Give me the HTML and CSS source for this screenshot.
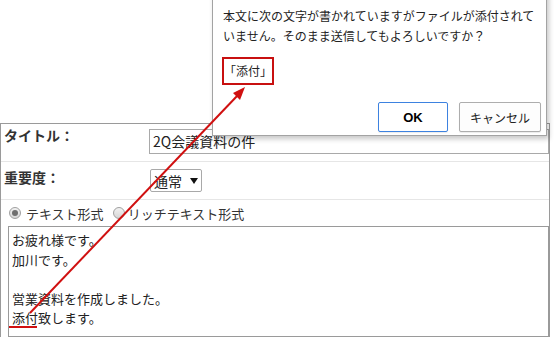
FILE: index.html
```html
<!DOCTYPE html>
<html lang="ja">
<head>
    <meta charset="UTF-8">
    <meta name="viewport" content="width=device-width, initial-scale=1.0">
    <title>メール作成</title>
    <link rel="stylesheet" href="styles.css">
</head>
<body>
    <div class="page">
        <div class="mail-form">
            <div class="row row-title">
                <div class="label">タイトル：</div>
                <div class="text-input">2Q会議資料の件</div>
            </div>
            <div class="row row-priority">
                <div class="label">重要度：</div>
                <div class="select">
                    <span>通常</span>
                    <svg class="select-arrow" width="8" height="6" viewBox="0 0 8 6"><path d="M0 0H8L4 6Z" fill="#111"/></svg>
                </div>
            </div>
            <div class="row row-body">
                <div class="format">
                    <span class="radio checked"></span><span class="format-text">テキスト形式</span>
                    <span class="radio"></span><span class="format-text">リッチテキスト形式</span>
                </div>
                <div class="body-text">お疲れ様です。<br>加川です。<br><br>営業資料を作成しました。<br>添付致します。</div>
            </div>
        </div>

        <!-- confirm dialog -->
        <div class="dialog">
            <p class="dialog-message">本文に次の文字が書かれていますがファイルが添付されていません。そのまま送信してもよろしいですか？</p>
            <div class="keyword">「添付」</div>
            <div class="dialog-buttons">
                <button class="btn btn-ok">OK</button>
                <button class="btn">キャンセル</button>
            </div>
        </div>

        <svg class="annotation" width="554" height="337" viewBox="0 0 554 337">
            <line x1="9" y1="327" x2="37" y2="327" stroke="#d01010" stroke-width="2"/>
            <line x1="30" y1="313" x2="238" y2="95" stroke="#d01010" stroke-width="2"/>
            <polygon points="245,87 233,93 240,100" fill="#d01010"/>
        </svg>
    </div>
</body>
</html>
```

FILE: styles.css
```css
body {
    margin: 0;
    background: #fff;
    font-family: "Noto Sans CJK JP", "Noto Sans", sans-serif;
    color: #333;
}
.page {
    position: relative;
    width: 554px;
    height: 337px;
    overflow: hidden;
}
.mail-form {
    margin-top: 123px;
    width: 550px;
    box-sizing: border-box;
    border-top: 1px solid #9a9a9a;
    border-left: 1px solid #9a9a9a;
    border-right: 1px solid #9a9a9a;
}
.row {
    display: flex;
    align-items: flex-start;
    border-bottom: 1px solid #e6e6e6;
}
.label {
    width: 148px;
    box-sizing: border-box;
    padding-left: 3px;
    font-size: 14px;
    line-height: 20px;
    font-weight: bold;
    color: #333;
}
.row-title {
    padding: 1px 0 7px 0;
}
.text-input {
    flex: 1;
    margin-top: 4px;
    height: 25px;
    box-sizing: border-box;
    border: 1px solid #a9a9a9;
    padding-left: 3px;
    font-size: 14px;
    line-height: 23px;
    color: #222;
}
.row-priority {
    padding: 5px 0 7px 0;
}
.select {
    margin-top: 2px;
    margin-left: 1px;
    height: 23px;
    width: 52px;
    box-sizing: border-box;
    border: 1px solid #a9a9a9;
    border-radius: 2px;
    display: flex;
    align-items: center;
    padding-left: 3px;
    font-size: 14px;
    color: #222;
}
.select-arrow {
    margin-left: 8px;
}
.row-body {
    flex-direction: column;
    align-items: stretch;
    padding: 3px 0 0 7px;
    border-bottom: none;
}
.format {
    display: flex;
    align-items: center;
    height: 20px;
    font-size: 13px;
    color: #333;
}
.radio {
    width: 12px;
    height: 12px;
    box-sizing: border-box;
    border: 1px solid #a0a0a0;
    border-radius: 50%;
    background: linear-gradient(#f2f2f2, #d6d6d6);
    margin: 0 5px 0 1px;
    position: relative;
}
.radio.checked::after {
    content: "";
    position: absolute;
    left: 2px;
    top: 2px;
    width: 6px;
    height: 6px;
    border-radius: 50%;
    background: #6f6f6f;
}
.format-text {
    margin-right: 4px;
}
.format-text + .radio {
    margin-left: 5px;
    margin-right: 3px;
}
.body-text {
    margin-top: 3px;
    height: 111px;
    box-sizing: border-box;
    border: 1px solid #9a9a9a;
    padding: 3px 3px;
    font-size: 13px;
    line-height: 19.5px;
    color: #222;
}
.dialog {
    position: absolute;
    left: 212px;
    top: -10px;
    width: 335px;
    height: 146px;
    box-sizing: border-box;
    border: 1px solid #a3a3a3;
    background: #fff;
    box-shadow: 2px 3px 5px rgba(0, 0, 0, 0.22);
    padding: 15px 5px 3px 10px;
    display: flex;
    flex-direction: column;
}
.dialog-message {
    margin: 0;
    font-size: 12px;
    line-height: 20px;
    color: #222;
}
.keyword {
    align-self: flex-start;
    margin: 11px 0 0 -1px;
    width: 52px;
    height: 28px;
    box-sizing: border-box;
    border: 2px solid #c81010;
    font-size: 12px;
    line-height: 24px;
    color: #222;
}
.dialog-buttons {
    margin-top: auto;
    display: flex;
    justify-content: flex-end;
    gap: 11px;
}
.btn {
    height: 30px;
    width: 82px;
    box-sizing: border-box;
    border: 1px solid #adadad;
    border-radius: 2px;
    background: #fdfdfd;
    box-shadow: 0 1px 1px rgba(0, 0, 0, 0.08);
    font-family: "Noto Sans CJK JP", sans-serif;
    font-size: 12px;
    color: #222;
    padding: 0;
}
.btn-ok {
    width: 70px;
    border-color: #3d82e0;
    background: #fff;
    font-family: "Liberation Sans", Arial, sans-serif;
    font-weight: bold;
    font-size: 13px;
    color: #000;
}
.annotation {
    position: absolute;
    left: 0;
    top: 0;
    pointer-events: none;
}
```
